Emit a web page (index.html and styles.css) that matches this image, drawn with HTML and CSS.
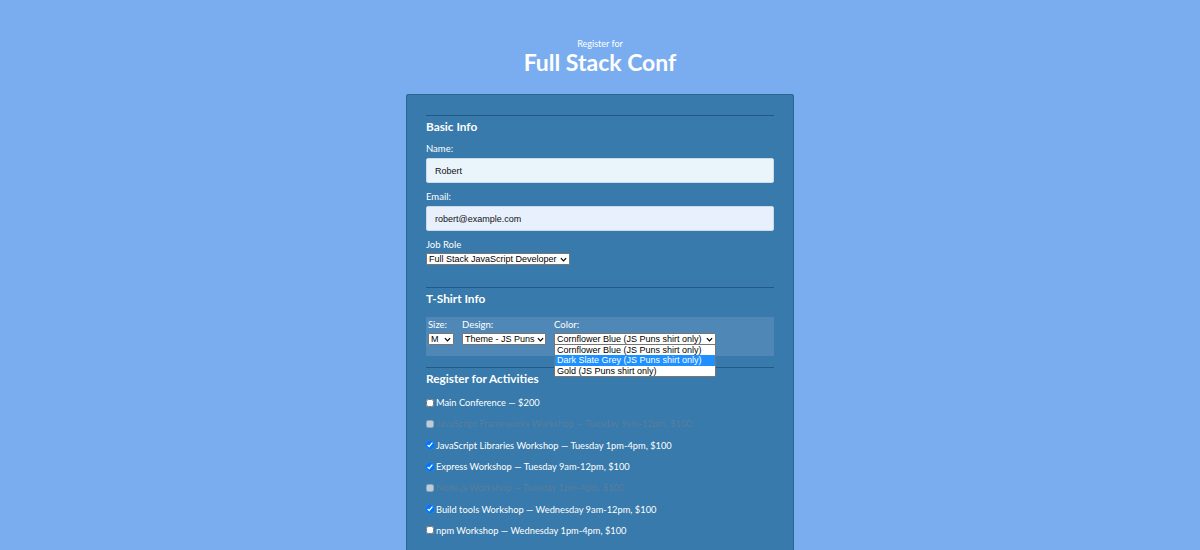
FILE: index.html
```html
<!DOCTYPE html>
<html lang="en">
<head>
<meta charset="utf-8">
<title>Register for Full Stack Conf</title>
<link rel="stylesheet" href="styles.css">
</head>
<body>
<header class="page-header">
  <span class="pre-title">Register for</span>
  <h1 class="title">Full Stack Conf</h1>
</header>
<form class="reg-form">
  <section class="group group-basic">
    <h2 class="group-title">Basic Info</h2>
    <label class="field-label" for="name">Name:</label>
    <input class="text-input" id="name" type="text" value="Robert">
    <label class="field-label" for="mail">Email:</label>
    <input class="text-input email" id="mail" type="email" value="robert@example.com">
    <label class="field-label" for="title">Job Role</label>
    <span class="sel sel-role"><span class="sel-text">Full Stack JavaScript Developer</span><svg class="chev" viewBox="0 0 8 5"><path d="M1 1l3 3 3-3" fill="none" stroke="#000" stroke-width="1.4"/></svg></span>
  </section>
  <section class="group group-shirt">
    <h2 class="group-title">T-Shirt Info</h2>
    <div class="shirt-box">
      <div class="shirt-col">
        <span class="field-label small">Size:</span>
        <span class="sel sel-size"><span class="sel-text">M</span><svg class="chev" viewBox="0 0 8 5"><path d="M1 1l3 3 3-3" fill="none" stroke="#000" stroke-width="1.4"/></svg></span>
      </div>
      <div class="shirt-col">
        <span class="field-label small">Design:</span>
        <span class="sel sel-design"><span class="sel-text">Theme - JS Puns</span><svg class="chev" viewBox="0 0 8 5"><path d="M1 1l3 3 3-3" fill="none" stroke="#000" stroke-width="1.4"/></svg></span>
      </div>
      <div class="shirt-col color-col">
        <span class="field-label small">Color:</span>
        <span class="sel sel-color"><span class="sel-text">Cornflower Blue (JS Puns shirt only)</span><svg class="chev" viewBox="0 0 8 5"><path d="M1 1l3 3 3-3" fill="none" stroke="#000" stroke-width="1.4"/></svg></span>
        <ul class="dropdown">
          <li class="opt">Cornflower Blue (JS Puns shirt only)</li>
          <li class="opt opt-active">Dark Slate Grey (JS Puns shirt only)</li>
          <li class="opt">Gold (JS Puns shirt only)</li>
        </ul>
      </div>
    </div>
  </section>
  <section class="group">
    <h2 class="group-title">Register for Activities</h2>
    <ul class="activities">
      <li class="act"><input type="checkbox"><span>Main Conference — $200</span></li>
      <li class="act disabled"><input type="checkbox" disabled><span>JavaScript Frameworks Workshop — Tuesday 9am-12pm, $100</span></li>
      <li class="act"><input type="checkbox" checked><span>JavaScript Libraries Workshop — Tuesday 1pm-4pm, $100</span></li>
      <li class="act"><input type="checkbox" checked><span>Express Workshop — Tuesday 9am-12pm, $100</span></li>
      <li class="act disabled"><input type="checkbox" disabled><span>Node.js Workshop — Tuesday 1pm-4pm, $100</span></li>
      <li class="act"><input type="checkbox" checked><span>Build tools Workshop — Wednesday 9am-12pm, $100</span></li>
      <li class="act"><input type="checkbox"><span>npm Workshop — Wednesday 1pm-4pm, $100</span></li>
    </ul>
  </section>
</form>
</body>
</html>
```
FILE: styles.css
```css
html, body {
  margin: 0;
  padding: 0;
}
body {
  background: #7aadf0;
  font-family: "Lato", "Open Sans", sans-serif;
  color: #fff;
  overflow: hidden;
}
.page-header {
  display: flex;
  flex-direction: column;
  align-items: center;
  padding-top: 38px;
}
.pre-title {
  font-size: 9px;
  line-height: 12px;
}
.title {
  margin: 0;
  font-size: 23px;
  line-height: 24px;
  font-weight: 700;
}
.reg-form {
  width: 348px;
  margin: 20px auto 0;
  padding: 20px 19px 40px;
  background: #377aab;
  border: 1px solid #2b6594;
  border-radius: 2px;
}
.group {
  border-top: 1px solid #215a86;
  display: flex;
  flex-direction: column;
  align-items: flex-start;
}
.group-basic {
  margin-bottom: 22px;
}
.group-shirt {
  margin-bottom: 11px;
}
.group-title {
  margin: 3px 0 0;
  font-size: 11.8px;
  line-height: 16px;
  font-weight: 700;
}
.field-label {
  margin-top: 8px;
  font-size: 9.5px;
  line-height: 12px;
}
.field-label.small {
  margin-top: 0;
}
.text-input {
  box-sizing: border-box;
  width: 100%;
  height: 25px;
  margin-top: 3px;
  padding: 0 8px;
  border: 1px solid #c9dbe8;
  border-radius: 2px;
  background: #eaf5fb;
  font-family: "Liberation Sans", Arial, sans-serif;
  font-size: 9px;
  color: #111;
}
.text-input.email {
  background: #e8f0fe;
}
.sel {
  box-sizing: border-box;
  display: inline-flex;
  align-items: center;
  justify-content: space-between;
  height: 12px;
  padding: 0 2px;
  background: #fff;
  border: 1px solid #767676;
  border-radius: 1px;
  font-family: "Liberation Sans", Arial, sans-serif;
  font-size: 9px;
  line-height: 10px;
  color: #000;
  white-space: nowrap;
}
.sel-role {
  margin-top: 2px;
  width: 144px;
}
.chev {
  width: 7px;
  height: 5px;
  flex: none;
  margin-left: 2px;
}
.shirt-box {
  box-sizing: border-box;
  width: 100%;
  margin-top: 10px;
  padding: 2px 2px 11px;
  background: #4f88b7;
  display: flex;
  gap: 8px;
}
.shirt-col {
  display: flex;
  flex-direction: column;
  align-items: flex-start;
  gap: 2px;
}
.color-col {
  position: relative;
}
.sel-size {
  width: 26px;
}
.sel-design {
  width: 84px;
}
.sel-color {
  width: 162px;
}
.dropdown {
  position: absolute;
  top: 25px;
  left: 0;
  width: 162px;
  box-sizing: border-box;
  margin: 0;
  padding: 0;
  list-style: none;
  background: #fff;
  border: 1px solid #767676;
  z-index: 2;
}
.opt {
  font-family: "Liberation Sans", Arial, sans-serif;
  font-size: 9px;
  line-height: 10.3px;
  padding: 0 2px;
  color: #000;
  white-space: nowrap;
}
.opt-active {
  background: #1e90ff;
  color: #fff;
}
.activities {
  list-style: none;
  margin: 5px 0 0;
  padding: 0;
}
.act {
  display: flex;
  align-items: center;
  height: 21.3px;
  font-size: 9.3px;
}
.act input {
  width: 8px;
  height: 8px;
  margin: 0 2px 0 0;
}
.act.disabled {
  color: #5a7d9c;
}
```
